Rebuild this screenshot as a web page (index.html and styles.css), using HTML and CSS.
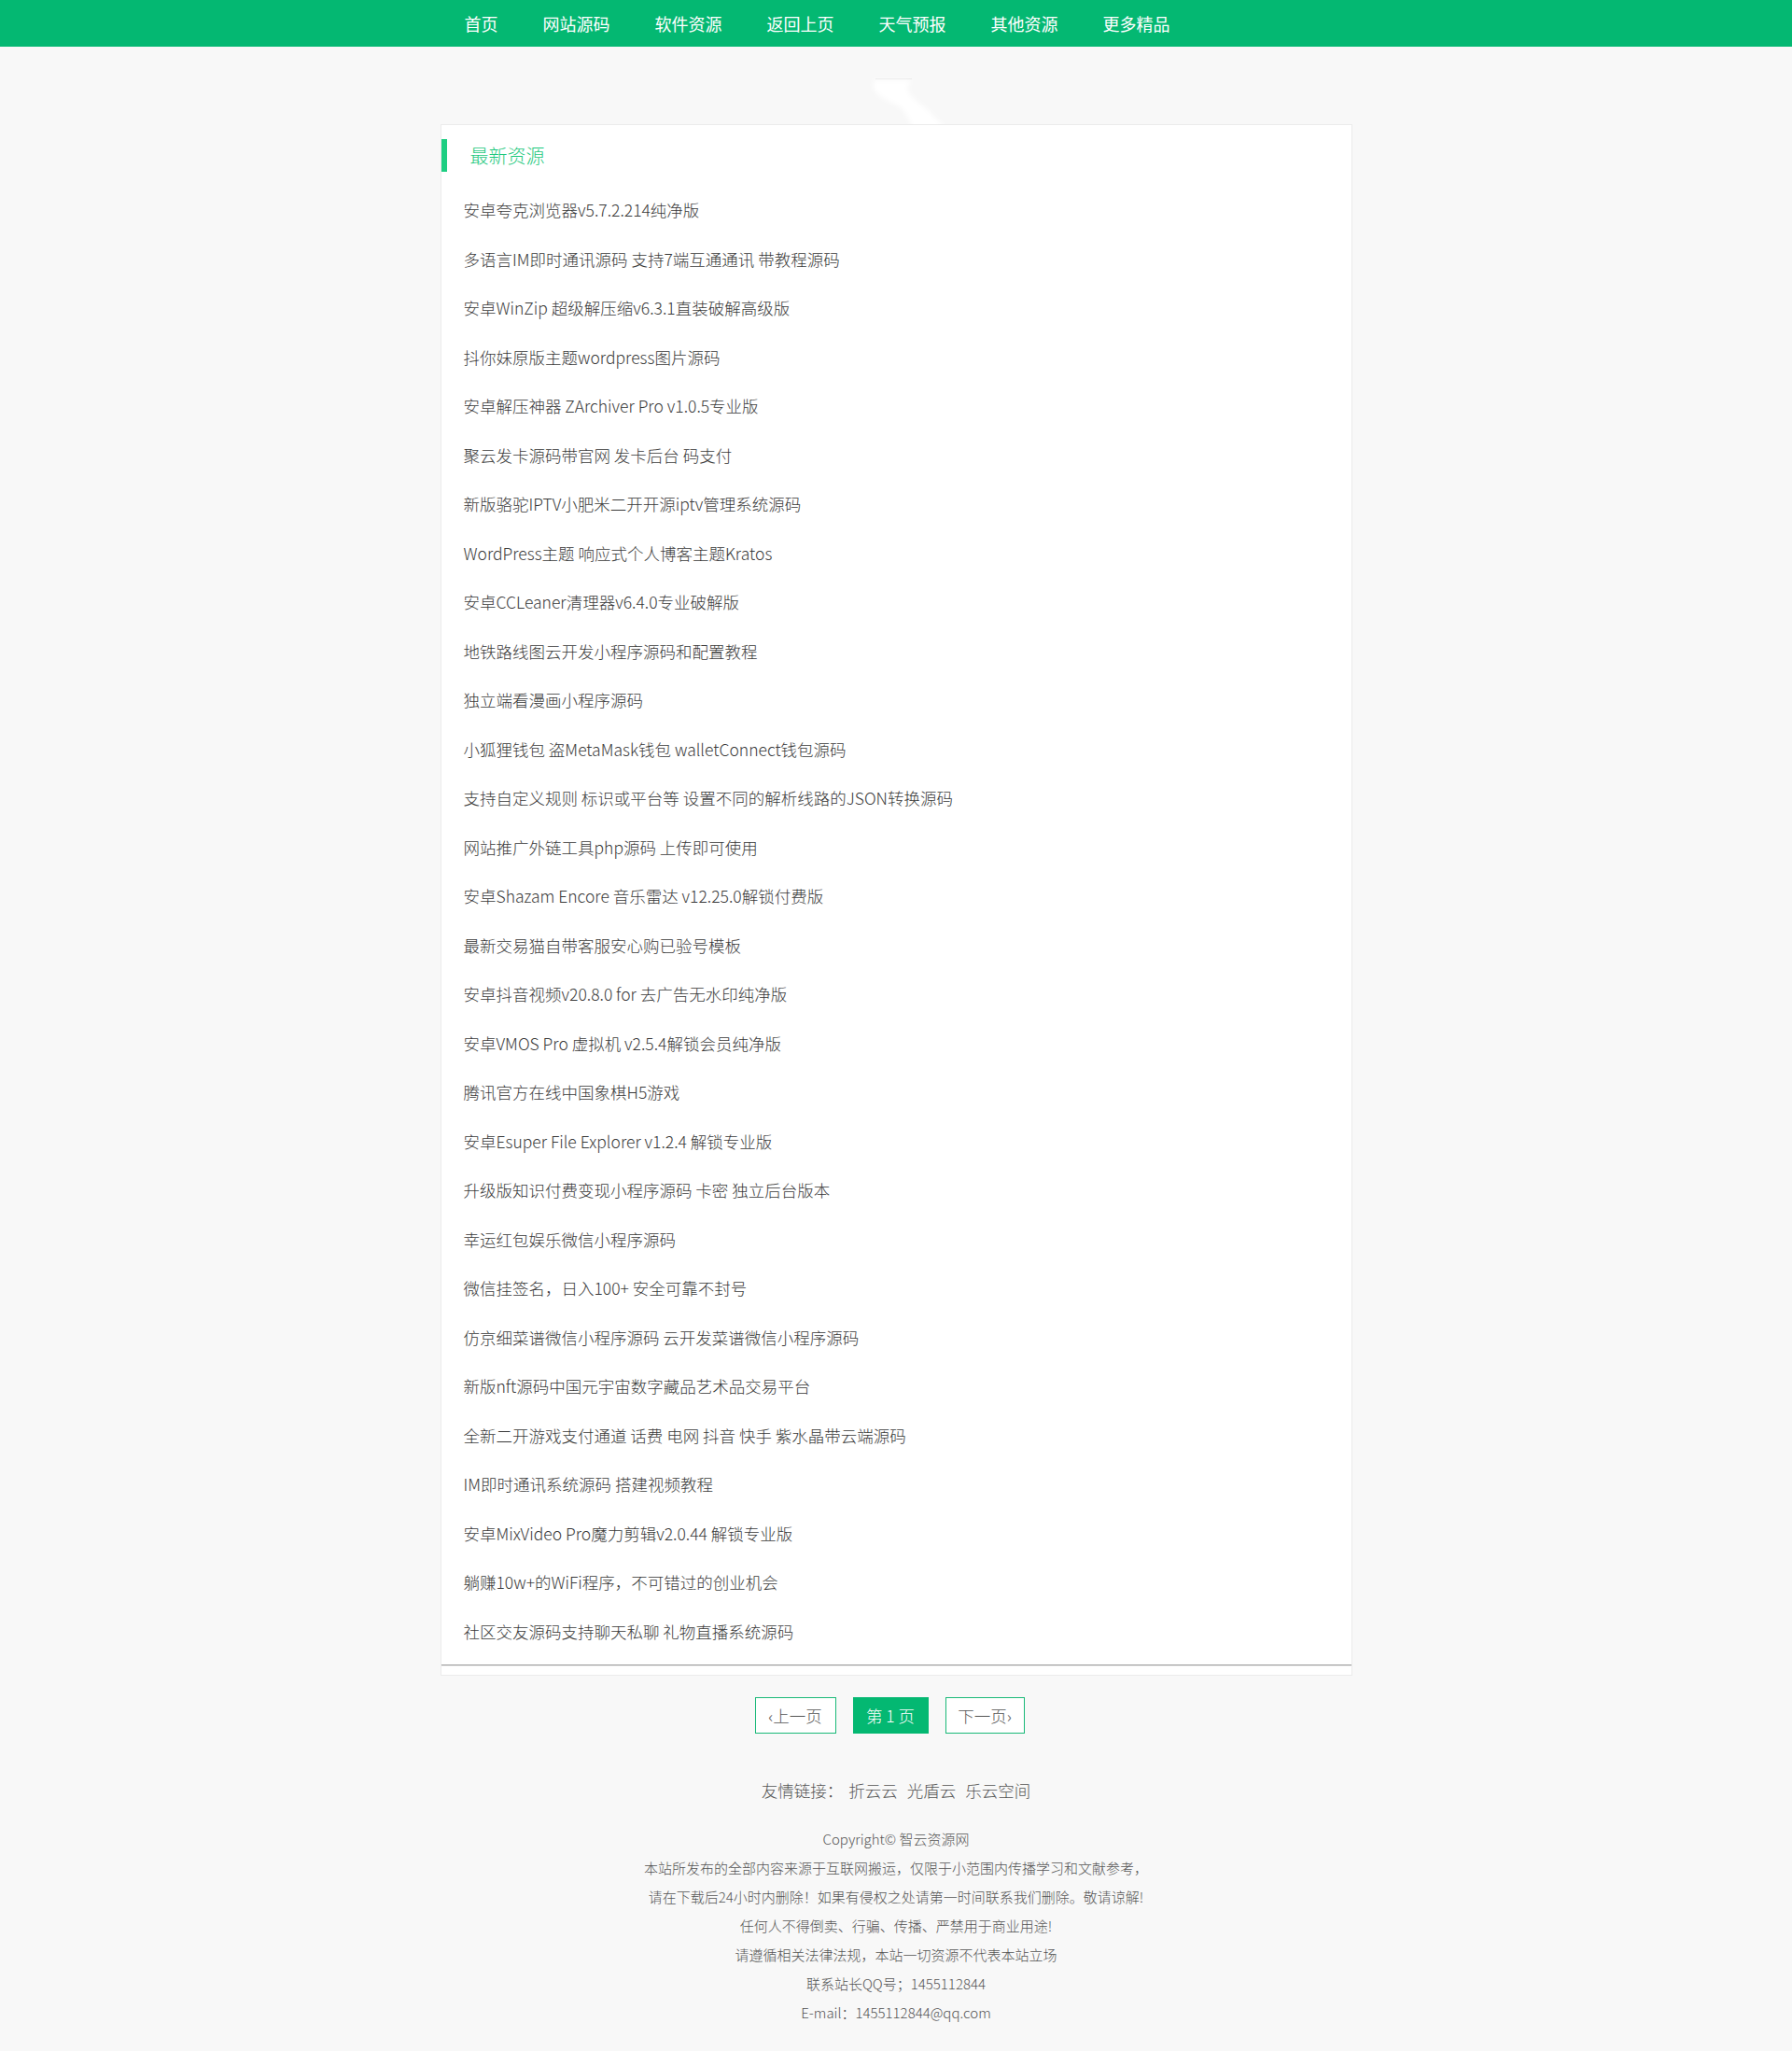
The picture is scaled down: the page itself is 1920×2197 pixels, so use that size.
FILE: index.html
```html
<!DOCTYPE html>
<html lang="zh-CN">
<head>
<meta charset="utf-8">
<title>最新资源</title>
<link rel="stylesheet" href="styles.css">
</head>
<body>
<header class="topnav">
  <ul class="nav-list">
    <li><a href="#">首页</a></li>
    <li><a href="#">网站源码</a></li>
    <li><a href="#">软件资源</a></li>
    <li><a href="#">返回上页</a></li>
    <li><a href="#">天气预报</a></li>
    <li><a href="#">其他资源</a></li>
    <li><a href="#">更多精品</a></li>
  </ul>
</header>

<main class="main">
  <svg class="deco" width="100" height="60" viewBox="0 0 100 60" aria-hidden="true">
    <defs>
      <filter id="blur" x="-20%" y="-20%" width="140%" height="140%">
        <feGaussianBlur stdDeviation="2.6"/>
      </filter>
    </defs>
    <line x1="8" y1="4.5" x2="47" y2="4.5" stroke="#e6e6e6" stroke-width="1"/>
    <path d="M6 6 L46 6 C42 12 40 20 52 28 C62 36 72 44 84 60 L48 60 C44 46 40 38 30 32 C20 27 8 22 6 14 Z" fill="#ffffff" filter="url(#blur)"/>
  </svg>
  <section class="panel">
    <h2 class="panel-title">最新资源</h2>
    <ul class="res-list">
      <li><a href="#">安卓夸克浏览器v5.7.2.214纯净版</a></li>
      <li><a href="#">多语言IM即时通讯源码 支持7端互通通讯 带教程源码</a></li>
      <li><a href="#">安卓WinZip 超级解压缩v6.3.1直装破解高级版</a></li>
      <li><a href="#">抖你妹原版主题wordpress图片源码</a></li>
      <li><a href="#">安卓解压神器 ZArchiver Pro v1.0.5专业版</a></li>
      <li><a href="#">聚云发卡源码带官网 发卡后台 码支付</a></li>
      <li><a href="#">新版骆驼IPTV小肥米二开开源iptv管理系统源码</a></li>
      <li><a href="#">WordPress主题 响应式个人博客主题Kratos</a></li>
      <li><a href="#">安卓CCLeaner清理器v6.4.0专业破解版</a></li>
      <li><a href="#">地铁路线图云开发小程序源码和配置教程</a></li>
      <li><a href="#">独立端看漫画小程序源码</a></li>
      <li><a href="#">小狐狸钱包 盗MetaMask钱包 walletConnect钱包源码</a></li>
      <li><a href="#">支持自定义规则 标识或平台等 设置不同的解析线路的JSON转换源码</a></li>
      <li><a href="#">网站推广外链工具php源码 上传即可使用</a></li>
      <li><a href="#">安卓Shazam Encore 音乐雷达 v12.25.0解锁付费版</a></li>
      <li><a href="#">最新交易猫自带客服安心购已验号模板</a></li>
      <li><a href="#">安卓抖音视频v20.8.0 for 去广告无水印纯净版</a></li>
      <li><a href="#">安卓VMOS Pro 虚拟机 v2.5.4解锁会员纯净版</a></li>
      <li><a href="#">腾讯官方在线中国象棋H5游戏</a></li>
      <li><a href="#">安卓Esuper File Explorer v1.2.4 解锁专业版</a></li>
      <li><a href="#">升级版知识付费变现小程序源码 卡密 独立后台版本</a></li>
      <li><a href="#">幸运红包娱乐微信小程序源码</a></li>
      <li><a href="#">微信挂签名，日入100+ 安全可靠不封号</a></li>
      <li><a href="#">仿京细菜谱微信小程序源码 云开发菜谱微信小程序源码</a></li>
      <li><a href="#">新版nft源码中国元宇宙数字藏品艺术品交易平台</a></li>
      <li><a href="#">全新二开游戏支付通道 话费 电网 抖音 快手 紫水晶带云端源码</a></li>
      <li><a href="#">IM即时通讯系统源码 搭建视频教程</a></li>
      <li><a href="#">安卓MixVideo Pro魔力剪辑v2.0.44 解锁专业版</a></li>
      <li><a href="#">躺赚10w+的WiFi程序，不可错过的创业机会</a></li>
      <li><a href="#">社区交友源码支持聊天私聊 礼物直播系统源码</a></li>
    </ul>
    <hr class="panel-rule">
  </section>

  <nav class="pager">
    <a class="pg pg-prev" href="#">‹上一页</a>
    <span class="pg pg-cur">第 1 页</span>
    <a class="pg pg-next" href="#">下一页›</a>
  </nav>
</main>

<footer class="footer">
  <p class="links">友情链接：<a href="#">折云云</a><a href="#">光盾云</a><a href="#">乐云空间</a></p>
  <div class="copy">
    <p>Copyright© 智云资源网</p>
    <p>本站所发布的全部内容来源于互联网搬运，仅限于小范围内传播学习和文献参考，</p>
    <p>请在下载后24小时内删除！如果有侵权之处请第一时间联系我们删除。敬请谅解!</p>
    <p>任何人不得倒卖、行骗、传播、严禁用于商业用途!</p>
    <p>请遵循相关法律法规，本站一切资源不代表本站立场</p>
    <p>联系站长QQ号；1455112844</p>
    <p>E-mail：1455112844@qq.com</p>
  </div>
</footer>
</body>
</html>
```

FILE: styles.css
```css
* { box-sizing: border-box; }

html, body {
  margin: 0;
  padding: 0;
}

body {
  background: #f8f8f8;
  font-family: "Noto Sans CJK SC", "Noto Sans", sans-serif;
  font-weight: 300;
  color: #444;
}

a { text-decoration: none; color: inherit; }

.topnav {
  background: #04b872;
  height: 50px;
}

.nav-list {
  list-style: none;
  margin: 0 auto;
  padding: 0 0 0 2px;
  width: 977px;
  display: flex;
  height: 50px;
}

.nav-list li a {
  display: block;
  padding: 0 24px;
  line-height: 50px;
  font-size: 18px;
  font-weight: 400;
  color: #fff;
}

.main {
  width: 977px;
  margin: 83px auto 0;
  position: relative;
}

.deco {
  position: absolute;
  left: 458px;
  top: -53px;
}

.panel {
  position: relative;
  background: #fff;
  border: 1px solid #ebebeb;
  padding-top: 15px;
}

.panel-title {
  margin: 0;
  height: 35px;
  line-height: 35px;
  border-left: 6px solid #1ece82;
  padding-left: 25px;
  font-size: 20px;
  font-weight: 300;
  color: #1ec87d;
}

.res-list {
  list-style: none;
  margin: 15px 0 0;
  padding: 0 0 0 24px;
}

.res-list li {
  height: 52.5px;
  line-height: 52.5px;
  font-size: 17.5px;
  color: #3a3a3a;
  white-space: nowrap;
}

.panel-rule {
  margin: 9px 0 9px;
  border: 0;
  border-top: 1px solid #9a9a9a;
  border-bottom: 1px solid #eeeeee;
  height: 0;
}

.pager {
  display: flex;
  justify-content: center;
  gap: 18px;
  margin-top: 23px;
  padding-right: 14px;
}

.pg {
  display: block;
  height: 39px;
  line-height: 37px;
  border: 1px solid #19b978;
  text-align: center;
  font-size: 17.5px;
  color: #555;
  background: #fff;
}

.pg-prev { width: 87px; }
.pg-cur { width: 81px; background: #04b872; border-color: #04b872; color: #fff; }
.pg-next { width: 85px; }

.footer {
  text-align: center;
  color: #555;
  padding-bottom: 24px;
}

.links {
  margin: 46px 0 0;
  line-height: 30px;
  font-size: 17.5px;
}

.links a { margin-left: 10px; }
.links a:first-child { margin-left: 6px; }

.copy {
  margin-top: 21px;
  font-size: 15px;
}

.copy p {
  margin: 0;
  line-height: 31px;
}
```
